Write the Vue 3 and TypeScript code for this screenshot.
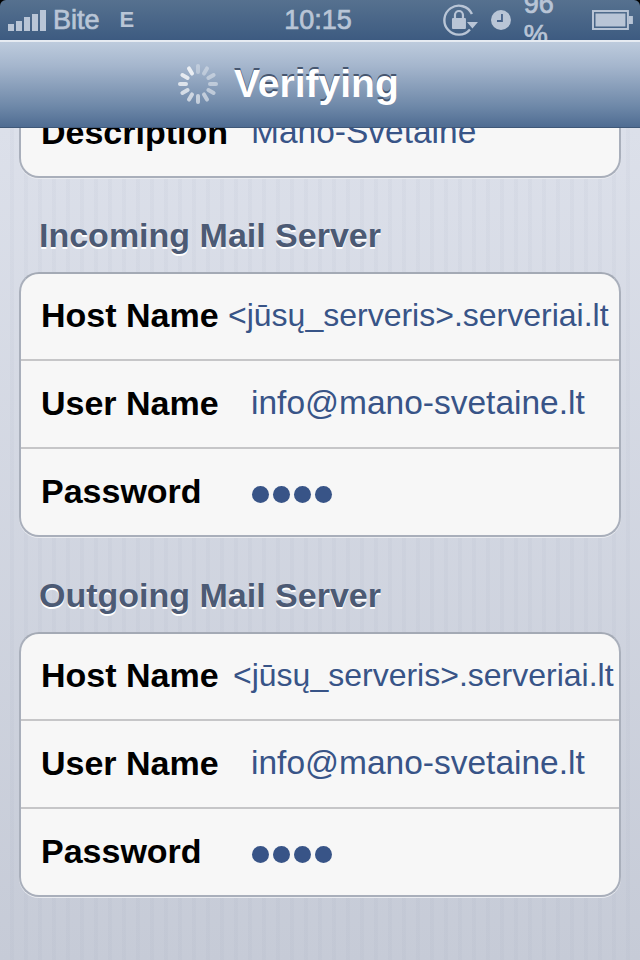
<script setup lang="ts">
interface Row {
  label: string
  value?: string
  secret?: boolean
  kind?: string
}

interface Section {
  title: string
  rows: Row[]
}

const mail = 'info@mano-svetaine.lt'
const host = '<jūsų_serveris>.serveriai.lt'

const sections: Section[] = [
  {
    title: 'Incoming Mail Server',
    rows: [
      { label: 'Host Name', value: host, kind: 'host-in' },
      { label: 'User Name', value: mail },
      { label: 'Password', secret: true }
    ]
  },
  {
    title: 'Outgoing Mail Server',
    rows: [
      { label: 'Host Name', value: host, kind: 'host-out' },
      { label: 'User Name', value: mail },
      { label: 'Password', secret: true }
    ]
  }
]

const bars = [7, 10, 14, 17, 21]
const rays = Array.from({ length: 12 }, (_, i) => i * 30)

// the spinner is brightest at 11 o'clock and fades going backwards round to 12
const rayOpacity = (i: number) => 0.8 - (11 - i) * 0.045
</script>

<template>
  <div class="screen">
    <header class="status">
      <div class="signal">
        <span v-for="h in bars" :key="h" class="bar" :style="{ height: h + 'px' }"></span>
      </div>
      <span class="carrier">Bite</span>
      <span class="edge">E</span>
      <span class="time">10:15</span>
      <svg class="lock" width="36" height="32" viewBox="0 0 36 32">
        <path d="M27 25.500A14.500 14.500 0 1 1 29 10" fill="none" stroke="currentColor" stroke-width="2.400" />
        <path d="M24 18h11l-5.500 6.500z" fill="currentColor" />
        <rect x="9" y="14" width="14" height="11" rx="1" fill="currentColor" />
        <path d="M12 15v-4a4 4 0 0 1 8 0v4" fill="none" stroke="currentColor" stroke-width="2.200" />
      </svg>
      <svg class="clock" width="20" height="20" viewBox="0 0 20 20">
        <circle cx="10" cy="10" r="10" fill="currentColor" />
        <path d="M11 4v7H6" fill="none" stroke="#46628a" stroke-width="1.800" />
      </svg>
      <span class="percent">96 %</span>
      <svg class="battery" width="42" height="20" viewBox="0 0 42 20">
        <rect x="1" y="1" width="35" height="18" fill="none" stroke="currentColor" stroke-width="2" />
        <rect x="3.500" y="3.500" width="30" height="13" fill="currentColor" />
        <rect x="37" y="6" width="4" height="8" fill="currentColor" />
      </svg>
    </header>

    <nav class="navbar">
      <svg class="spinner" width="40" height="40" viewBox="-20 -20 40 40">
        <line
          v-for="(deg, i) in rays"
          :key="deg"
          x1="0"
          y1="-12"
          x2="0"
          y2="-18"
          stroke="#fff"
          stroke-width="4"
          stroke-linecap="round"
          :opacity="rayOpacity(i)"
          :transform="`rotate(${deg})`"
        />
      </svg>
      <h1 class="nav-title">Verifying</h1>
    </nav>

    <main class="content">
      <div class="card first-card">
        <div class="row">
          <span class="label">Description</span>
          <span class="value">Mano-Svetaine</span>
        </div>
      </div>

      <section v-for="section in sections" :key="section.title" class="section">
        <h2 class="section-title">{{ section.title }}</h2>
        <div class="card">
          <div v-for="row in section.rows" :key="row.label" class="row">
            <span class="label" :class="row.kind">{{ row.label }}</span>
            <span v-if="row.secret" class="dots">
              <i v-for="n in 4" :key="n" class="dot"></i>
            </span>
            <span v-else class="value" :class="{ 'value-fit': row.kind }">{{ row.value }}</span>
          </div>
        </div>
      </section>
    </main>
  </div>
</template>

<style scoped>
.screen {
  position: relative;
  display: flex;
  flex-direction: column;
  width: 640px;
  height: 960px;
  overflow: hidden;
  background: #000;
  font-family: "Liberation Sans", Arial, sans-serif;
}

/* Status bar */
.status {
  display: flex;
  align-items: center;
  height: 40px;
  padding: 0 6px 0 8px;
  box-sizing: border-box;
  flex-shrink: 0;
  border-radius: 6px 6px 0 0;
  background: linear-gradient(#56718f, #3d5b81);
  color: #b9c5d6;
  font-size: 27px;
}

.signal {
  display: flex;
  align-items: flex-end;
  gap: 2px;
  width: 38px;
  height: 21px;
}

.bar {
  width: 6px;
  background: #b9c5d6;
}

.carrier,
.time,
.percent {
  -webkit-text-stroke: 0.7px #b9c5d6;
}

.carrier {
  margin-left: 7px;
}

.edge {
  margin-left: 20px;
  font-size: 22px;
  font-weight: 700;
}

.time {
  margin-left: 150px;
}

.lock {
  margin-left: 91px;
}

.clock {
  margin-left: 12px;
}

.percent {
  margin-left: 13px;
}

.battery {
  margin-left: 7px;
}

/* Navigation bar */
.navbar {
  position: relative;
  z-index: 1;
  display: flex;
  align-items: center;
  gap: 16px;
  height: 88px;
  padding: 0 0 2px 178px;
  box-sizing: border-box;
  flex-shrink: 0;
  border-top: 2px solid #e6ebf2;
  border-bottom: 1px solid #3f5878;
  background: linear-gradient(#bdcbdd, #a5b6cd 28%, #6f89a9 75%, #4f6c92);
}

.nav-title {
  margin: 0;
  color: #fff;
  font-size: 39px;
  font-weight: 700;
  text-shadow: 0 -2px 0 #46566f;
}

/* Settings list */
.content {
  flex: 1;
  min-height: 0;
  padding: 0 19px;
  background:
    repeating-linear-gradient(90deg, rgba(255, 255, 255, 0) 0 10px, rgba(130, 140, 165, 0.05) 10px 14px),
    linear-gradient(#dce0ea, #c6cbd7);
}

.first-card {
  margin-top: -40px;
}

.section {
  margin-top: 37px;
}

.section:last-child {
  margin-top: 38px;
}

.section-title {
  margin: 0 0 17px 20px;
  color: #4c5a74;
  font-size: 34px;
  line-height: 40px;
  font-weight: 700;
  text-shadow: 0 2px 0 #fff;
}

.card {
  border: 2px solid #a9afbb;
  border-top-color: #a4aab5;
  border-radius: 20px;
  background: #f7f7f7;
  box-shadow: 0 1px 0 #e9ebf0;
  overflow: hidden;
}

.row {
  display: flex;
  align-items: center;
  height: 88px;
  padding: 0 0 2px 20px;
  box-sizing: border-box;
  border-top: 2px solid #c6c6c8;
}

.row:first-child {
  border-top: 0;
  height: 85px;
}

.first-card .row:first-child {
  height: 86px;
}

.label {
  width: 210px;
  flex-shrink: 0;
  color: #000;
  font-size: 34px;
  font-weight: 700;
}

.label.host-in {
  width: 187px;
}

.label.host-out {
  width: 192px;
}

.value {
  color: #385487;
  font-size: 33.5px;
  white-space: nowrap;
}

.value-fit {
  font-size: 32px;
}

.dots {
  display: flex;
  gap: 4px;
  margin: 6px 0 0 1px;
}

.dot {
  width: 17px;
  height: 17px;
  border-radius: 50%;
  background: #385487;
}
</style>

<style>
html,
body {
  background: #c6cbd7;
}
</style>
